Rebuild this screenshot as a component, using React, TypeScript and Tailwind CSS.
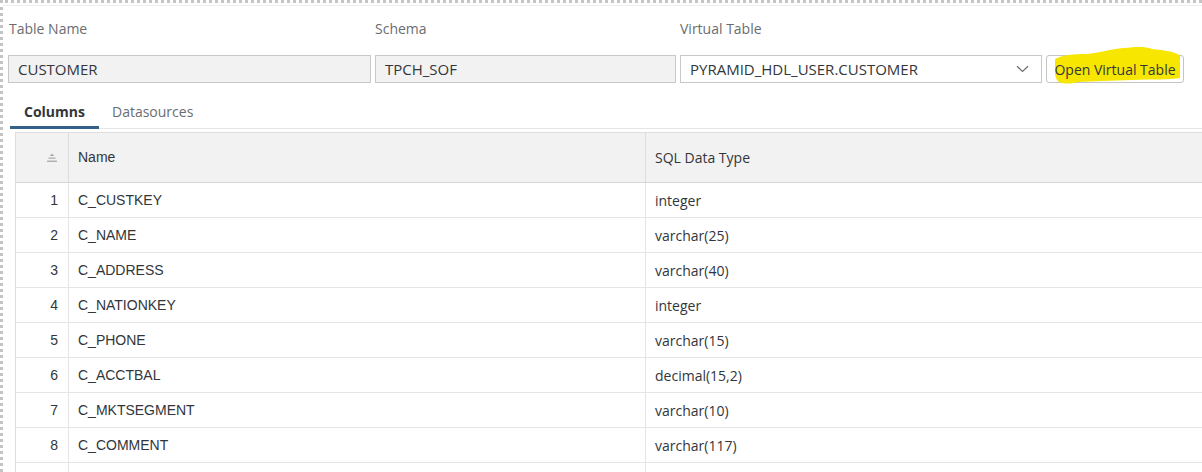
import React from "react";

const rows: [number, string, string][] = [
  [1, "C_CUSTKEY", "integer"],
  [2, "C_NAME", "varchar(25)"],
  [3, "C_ADDRESS", "varchar(40)"],
  [4, "C_NATIONKEY", "integer"],
  [5, "C_PHONE", "varchar(15)"],
  [6, "C_ACCTBAL", "decimal(15,2)"],
  [7, "C_MKTSEGMENT", "varchar(10)"],
  [8, "C_COMMENT", "varchar(117)"],
];

function SortIcon() {
  return (
    <svg width="12" height="10" viewBox="0 0 12 10" className="block">
      <path d="M6 0.5 L8.2 3 H3.8 Z" fill="#a8a8a8" />
      <rect x="2.5" y="4.5" width="7" height="1.2" fill="#a8a8a8" />
      <rect x="1" y="7.6" width="10" height="1.3" fill="#a8a8a8" />
    </svg>
  );
}

function Chevron() {
  return (
    <svg width="13" height="8" viewBox="0 0 13 8" className="block">
      <path d="M1 1.2 L6.5 6.5 L12 1.2" fill="none" stroke="#6a6d70" strokeWidth="1.2" />
    </svg>
  );
}

export default function App() {
  return (
    <div className="relative w-[1202px] h-[472px] overflow-hidden bg-white border-l-[3px] border-t-[3px] border-dotted border-[#c4c4c4] font-['Open_Sans',sans-serif] text-[#32363a]">
      <div className="h-px bg-[#ededed] mt-[2px]" />
      <div className="pl-[5px] pt-[13px]">
        <div className="grid grid-cols-[363px_301px_362px_138px] gap-x-[4px] text-[14px] leading-[20px] text-[#6a6d70]">
          <div className="pl-px">Table Name</div>
          <div>Schema</div>
          <div>Virtual Table</div>
          <div />
        </div>
        <div className="mt-[16px] grid grid-cols-[363px_301px_362px_138px] gap-x-[4px] text-[14px]">
          <div className="h-[28px] flex items-center px-[9px] bg-[#f2f2f2] border border-[#c8c8c8] text-[15px]">CUSTOMER</div>
          <div className="h-[28px] flex items-center px-[9px] bg-[#f2f2f2] border border-[#c8c8c8] text-[15px]">TPCH_SOF</div>
          <div className="h-[28px] flex items-center justify-between pl-[9px] pr-[12px] bg-white border border-[#c8c8c8]">
            <span className="text-[15px]">PYRAMID_HDL_USER.CUSTOMER</span>
            <Chevron />
          </div>
          <div className="relative h-[28px] flex items-center justify-center bg-white border border-[#c4c4c4] rounded-[3px]">
            <svg className="absolute left-[5px] top-[-10px]" width="130" height="40" viewBox="0 0 130 40">
              <path
                d="M3 13 C10 9 22 8 34 8 C48 7 58 3 72 2 C84 1 92 0 100 3 C110 4 120 5 128 9 L128 32 C118 34 100 33 80 34 C60 35 40 35 26 36 C18 38 12 38 7 36 C4 34 3 30 3 26 Z"
                fill="#f7e600"
              />
            </svg>
            <span className="relative">Open Virtual Table</span>
          </div>
        </div>
        <div className="mt-[12px] ml-[2px] flex border-b border-[#e5e5e5] text-[14px] leading-[20px]">
          <div className="px-[14px] pt-[7px] pb-[4px] font-bold text-[#32363a] border-b-[3px] border-[#346187] -mb-px">Columns</div>
          <div className="pl-[13px] pr-[14px] pt-[7px] pb-[4px] text-[#6a6d70]">Datasources</div>
        </div>
        <div className="mt-[3px] ml-[7px] w-[1200px] border-t border-l border-[#dedede] text-[14px]">
          <div className="flex h-[50px] bg-[#f2f2f2] border-b border-[#d6d6d6]">
            <div className="w-[53px] flex items-center justify-end pr-[10px] border-r border-[#dcdcdc]">
              <SortIcon />
            </div>
            <div className="w-[577px] flex items-center pl-[9px] border-r border-[#dcdcdc] font-['Liberation_Sans',sans-serif]">Name</div>
            <div className="flex-1 flex items-center pl-[9px]">SQL Data Type</div>
          </div>
          {rows.map(([n, name, type]) => (
            <div key={n} className="flex h-[35px] border-b border-[#e5e5e5]">
              <div className="w-[53px] flex items-center justify-end pr-[10px] border-r border-[#e5e5e5] font-['Liberation_Sans',sans-serif]">{n}</div>
              <div className="w-[577px] flex items-center pl-[9px] border-r border-[#e5e5e5] font-['Liberation_Sans',sans-serif]">{name}</div>
              <div className="flex-1 flex items-center pl-[9px]">{type}</div>
            </div>
          ))}
          <div className="flex h-[35px]">
            <div className="w-[53px] border-r border-[#e5e5e5]" />
            <div className="w-[577px] border-r border-[#e5e5e5]" />
            <div className="flex-1" />
          </div>
        </div>
      </div>
    </div>
  );
}
